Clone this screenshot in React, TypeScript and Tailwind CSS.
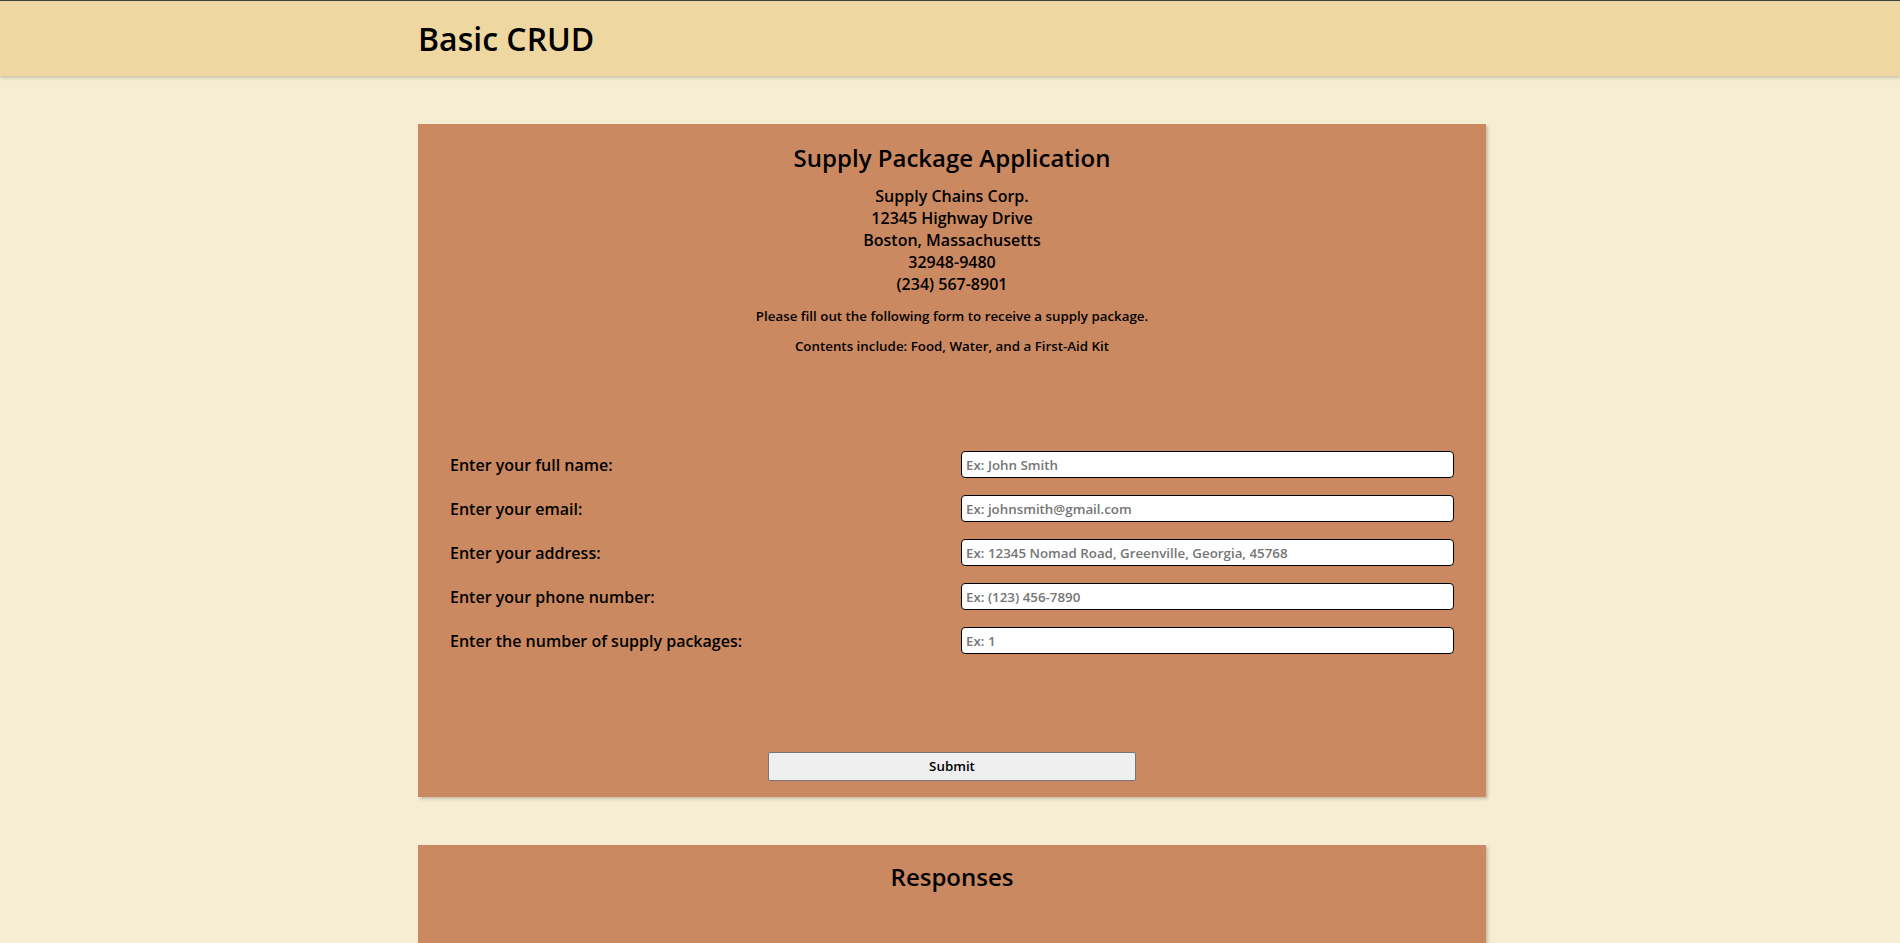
import React from "react";

const fields = [
  { label: "Enter your full name:", ph: "Ex: John Smith" },
  { label: "Enter your email:", ph: "Ex: johnsmith@gmail.com" },
  { label: "Enter your address:", ph: "Ex: 12345 Nomad Road, Greenville, Georgia, 45768" },
  { label: "Enter your phone number:", ph: "Ex: (123) 456-7890" },
  { label: "Enter the number of supply packages:", ph: "Ex: 1" },
];

export default function App() {
  return (
    <div
      className="min-h-[943px] bg-[#F6EED2] text-black"
      style={{ fontFamily: '"Open Sans", "Noto Sans", sans-serif' }}
    >
      <header className="h-[76px] bg-[#EED7A1] border-t border-[#3c3f43] shadow-[0_2px_3px_rgba(0,0,0,0.18)] relative z-10">
        <div className="ml-[22%] w-[1068px] pt-[16px]">
          <h1 className="text-[32px] leading-[44px] font-semibold">Basic CRUD</h1>
        </div>
      </header>

      <main className="pt-[48px] pb-[48px] flex flex-col gap-[48px]">
        <section className="ml-[22%] w-[1068px] bg-[#CB8961] shadow-[2px_2px_3px_rgba(0,0,0,0.2)] px-[32px] pt-[17px] pb-[16px]">
          <h2 className="text-center text-[24px] leading-[33px] font-semibold">
            Supply Package Application
          </h2>
          <div className="mt-[11px] text-center text-[16px] leading-[22px] font-semibold">
            <p>Supply Chains Corp.</p>
            <p>12345 Highway Drive</p>
            <p>Boston, Massachusetts</p>
            <p>32948-9480</p>
            <p>(234) 567-8901</p>
          </div>
          <p className="mt-[12px] text-center text-[13.33px] leading-[18px] font-semibold">
            Please fill out the following form to receive a supply package.
          </p>
          <p className="mt-[12px] text-center text-[13.33px] leading-[18px] font-semibold">
            Contents include: Food, Water, and a First-Aid Kit
          </p>

          <form className="mt-[96px] flex flex-col gap-[17px]">
            {fields.map((f) => (
              <div key={f.label} className="flex items-center justify-between">
                <label className="text-[16px] leading-[22px] font-semibold">{f.label}</label>
                <input
                  type="text"
                  placeholder={f.ph}
                  className="w-[493px] h-[27px] bg-white border border-black rounded-[4px] px-[4px] text-[13.33px] font-semibold placeholder:text-[#757575] outline-none"
                />
              </div>
            ))}
            <div className="flex justify-center mt-[81px]">
              <button
                type="button"
                className="w-[368px] h-[29px] bg-[#EFEFEF] border border-[#767676] rounded-[2px] text-[13.33px] font-semibold"
              >
                Submit
              </button>
            </div>
          </form>
        </section>

        <section className="ml-[22%] w-[1068px] bg-[#CB8961] shadow-[2px_2px_3px_rgba(0,0,0,0.2)] pt-[15px] h-[200px]">
          <h2 className="text-center text-[24px] leading-[33px] font-semibold">Responses</h2>
        </section>
      </main>
    </div>
  );
}
